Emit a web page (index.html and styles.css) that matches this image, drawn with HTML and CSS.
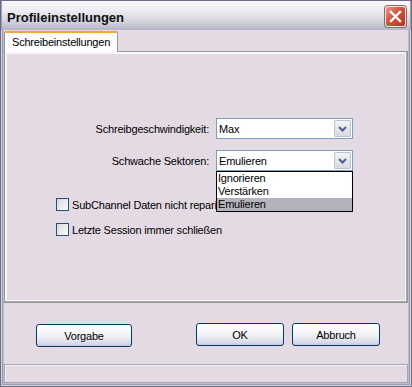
FILE: index.html
```html
<!DOCTYPE html>
<html lang="de">
<head>
    <meta charset="UTF-8">
    <title>Profileinstellungen</title>
    <link rel="stylesheet" href="styles.css">
</head>
<body>

<div class="window">
    <!-- Titelleiste -->
    <div class="titlebar">
        <span class="title">Profileinstellungen</span>
        <span class="close-btn">
            <svg width="13" height="13" viewBox="0 0 13 13">
                <path d="M2 2 L11 11 M11 2 L2 11" stroke="#fff" stroke-width="2.4" stroke-linecap="square"/>
            </svg>
        </span>
    </div>

    <!-- Register -->
    <div class="tabstrip">
        <div class="tab">Schreibeinstellungen</div>
    </div>

    <div class="tabpanel">
        <div class="fields">
            <label class="field-label">Schreibgeschwindigkeit:</label>
            <div class="combo">
                <span class="combo-text">Max</span>
                <span class="combo-arrow">
                    <svg width="9" height="6" viewBox="0 0 9 6"><path d="M1 1 L4.5 4.5 L8 1" fill="none" stroke="#4d6185" stroke-width="2"/></svg>
                </span>
            </div>

            <label class="field-label">Schwache Sektoren:</label>
            <div class="combo">
                <span class="combo-text">Emulieren</span>
                <span class="combo-arrow">
                    <svg width="9" height="6" viewBox="0 0 9 6"><path d="M1 1 L4.5 4.5 L8 1" fill="none" stroke="#4d6185" stroke-width="2"/></svg>
                </span>
                <!-- offene Auswahlliste liegt über der Checkbox-Beschriftung -->
                <ul class="combo-list">
                    <li>Ignorieren</li>
                    <li>Verstärken</li>
                    <li class="selected">Emulieren</li>
                </ul>
            </div>
        </div>

        <div class="checks">
            <label class="check"><span class="box"></span>SubChannel Daten nicht reparieren</label>
            <label class="check"><span class="box"></span>Letzte Session immer schließen</label>
        </div>
    </div>

    <!-- Schaltflächen -->
    <div class="buttons">
        <button class="btn btn-default">Vorgabe</button>
        <button class="btn btn-ok">OK</button>
        <button class="btn">Abbruch</button>
    </div>

    <div class="statusbar"></div>
</div>

</body>
</html>
```

FILE: styles.css
```css
body {
    margin: 0;
    font-family: "Liberation Sans", Arial, sans-serif;
    font-size: 11px;
    letter-spacing: -0.2px;
    color: #000;
    background: #e3dae3;
}
.window {
    width: 412px;
    height: 387px;
    box-sizing: border-box;
    display: flex;
    flex-direction: column;
    background: #e3dae3;
    border: 1px solid #6c6c84;
    padding: 0 3px 3px 3px;
    box-shadow: inset 0 0 0 1px #d4d4e0, inset 0 0 0 2px #9c9cb0, inset 0 0 0 3px #c0bccc;
}
.titlebar {
    height: 29px;
    margin: 0 -3px;
    padding: 0 5px;
    display: flex;
    align-items: center;
    justify-content: space-between;
    background: linear-gradient(#fbfbfd, #ebebf1 35%, #d0d0dc 75%, #b4b4c6);
    border-left: 1px solid #9c9cb0;
    border-right: 1px solid #9c9cb0;
}
.title {
    font-size: 13px;
    font-weight: bold;
    letter-spacing: 0;
    color: #101010;
    padding-top: 3px;
}
.close-btn {
    width: 19px;
    height: 19px;
    margin-top: 2px;
    margin-right: -1px;
    border: 1px solid #f4e8e8;
    border-radius: 3px;
    display: flex;
    align-items: center;
    justify-content: center;
    background: linear-gradient(135deg, #e99a8c, #d1513f 45%, #b93224);
    box-shadow: 0 0 0 1px #a06060;
}
.tabstrip {
    height: 21px;
    margin-top: 1px;
    display: flex;
    align-items: flex-end;
    position: relative;
    z-index: 1;
    margin-bottom: -1px;
}
.tab {
    width: 114px;
    height: 21px;
    padding-left: 7px;
    box-sizing: border-box;
    line-height: 18px;
    background: #fcfcfe;
    border: 1px solid #919b9c;
    border-bottom: none;
    border-top: 2px solid #f2a63a;
    border-radius: 2px 2px 0 0;
}
.tabpanel {
    height: 252px;
    box-sizing: border-box;
    border: 1px solid #919b9c;
    box-shadow: inset -1px -1px 0 #a4ac98, inset 2px 2px 0 #f8f6f8, inset -2px -2px 0 #f8f6f8;
    padding-top: 66px;
}
.fields {
    display: grid;
    grid-template-columns: 204px 137px;
    column-gap: 7px;
    row-gap: 11px;
    align-items: center;
}
.field-label {
    text-align: right;
}
.combo {
    position: relative;
    height: 21px;
    box-sizing: border-box;
    border: 1px solid #7f9db9;
    background: #fff;
    display: flex;
    align-items: center;
    justify-content: space-between;
}
.combo-text {
    padding-left: 2px;
}
.combo-arrow {
    width: 17px;
    height: 17px;
    margin-right: 1px;
    box-sizing: border-box;
    border: 1px solid #bcc4d4;
    border-radius: 1px;
    background: linear-gradient(#f2f2f6, #d8dae4);
    display: flex;
    align-items: center;
    justify-content: center;
}
.combo-list {
    position: absolute;
    top: 20px;
    left: -1px;
    width: 137px;
    height: 41px;
    box-sizing: border-box;
    margin: 0;
    padding: 0;
    list-style: none;
    background: #fff;
    border: 1px solid #000;
    z-index: 2;
}
.combo-list li {
    height: 13px;
    line-height: 13px;
    padding-left: 1px;
}
.combo-list li.selected {
    background: #b4b2bc;
}
.checks {
    margin-top: 27px;
    padding-left: 51px;
    display: flex;
    flex-direction: column;
    gap: 12px;
}
.check {
    display: flex;
    align-items: center;
    height: 13px;
    white-space: nowrap;
}
.box {
    width: 13px;
    height: 13px;
    box-sizing: border-box;
    margin-right: 3px;
    border: 1px solid #1c5180;
    background: linear-gradient(135deg, #d8d8d8, #f2f2f2 70%, #ffffff);
}
.buttons {
    height: 61px;
    box-sizing: border-box;
    padding: 20px 28px 0 32px;
    display: flex;
    align-items: flex-start;
    gap: 8px;
}
.btn {
    height: 23px;
    width: 88px;
    font-family: "Liberation Sans", Arial, sans-serif;
    font-size: 11px;
    letter-spacing: -0.2px;
    color: #000;
    border: 1px solid #003c74;
    border-radius: 3px;
    background: linear-gradient(#ffffff, #f2f2f6 50%, #dcdce8 85%, #c8c8da);
    padding: 0;
}
.btn-default {
    width: 96px;
    margin-top: 1px;
}
.btn-ok {
    margin-left: auto;
}
.statusbar {
    height: 19px;
    box-sizing: border-box;
    border: 1px solid #a4a4b0;
    box-shadow: inset 1px 1px 0 #f6f4f6;
}
```
